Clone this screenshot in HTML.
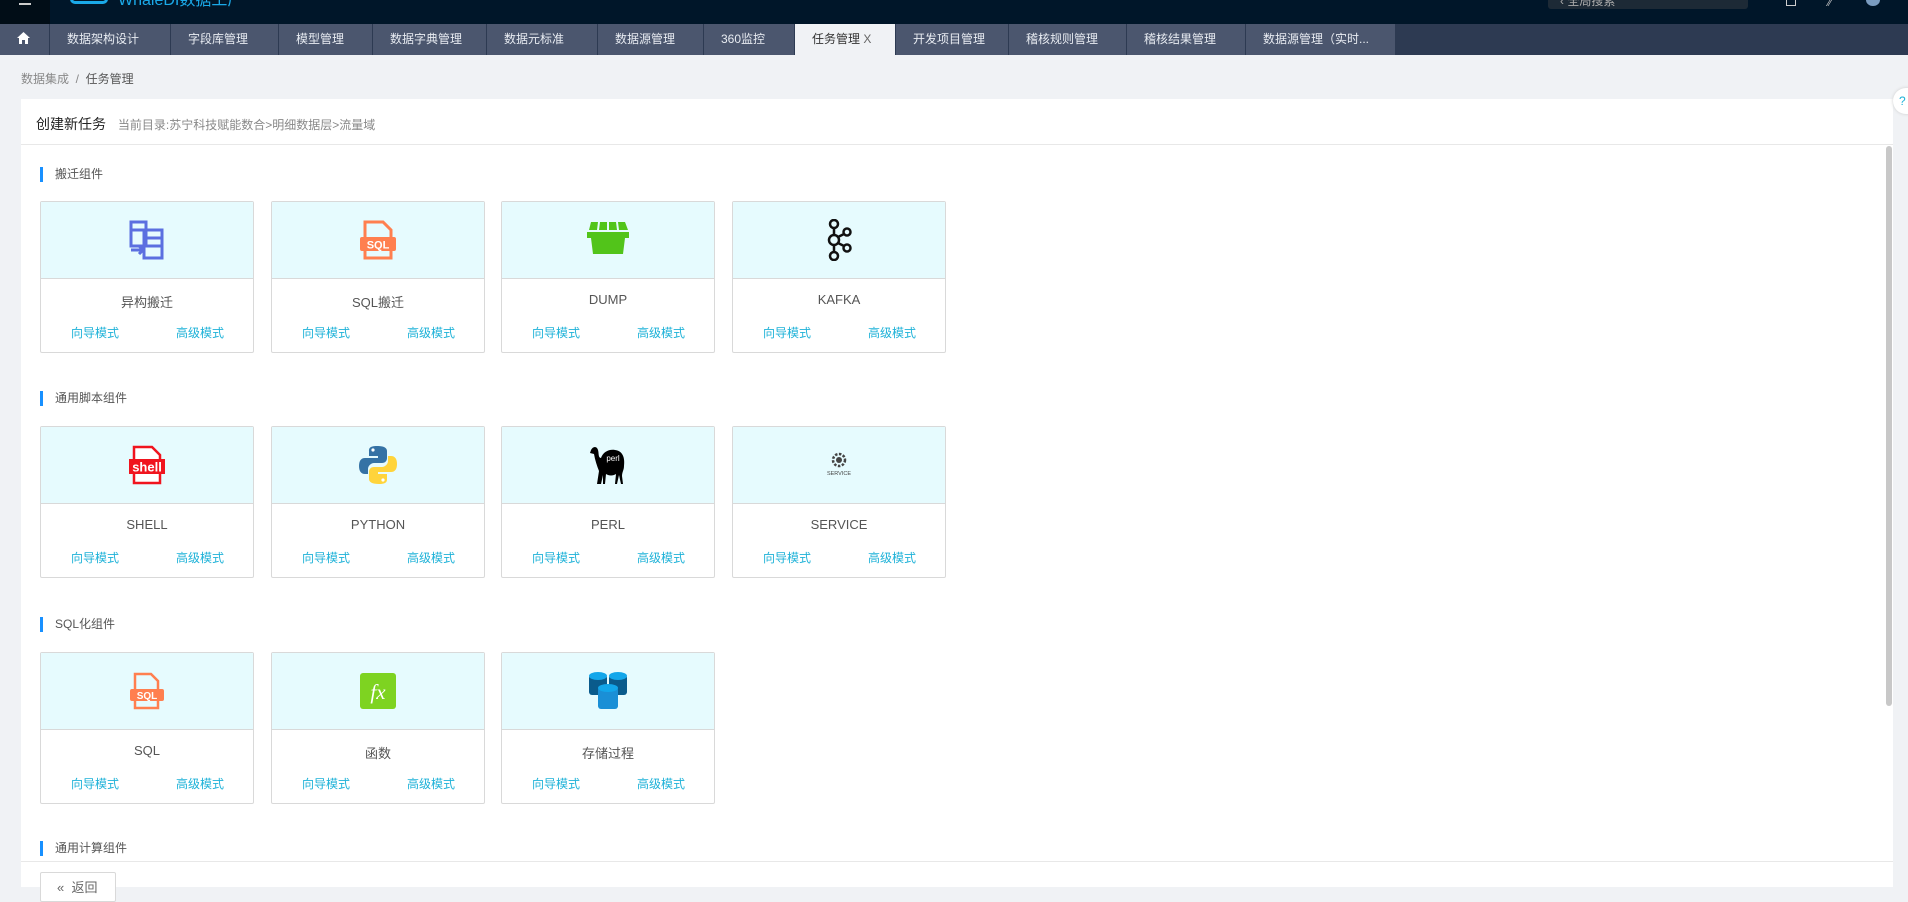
<!DOCTYPE html>
<html><head><meta charset="utf-8"><style>
*{margin:0;padding:0;box-sizing:border-box}
body{width:1908px;height:887px;overflow:hidden;background:#f0f2f5;font-family:"Liberation Sans","Noto Sans CJK SC",sans-serif;position:relative;font-size:13px;color:#333}
.abs{position:absolute}
.top{left:0;top:0;width:1908px;height:24px;background:#001629}
.tabs{left:0;top:24px;width:1908px;height:31px;background:#2d3a52}
.tab{position:absolute;top:0;height:31px;background:#4b566e;border-right:1px solid #2d3a52;color:#e8ecf2;font-size:12px;line-height:31px;padding-left:17px;white-space:nowrap}
.tab.act{background:#f0f2f5;color:#333}
.panel{left:21px;top:99px;width:1872px;height:788px;background:#fff}
.sec{position:absolute;left:40px;font-size:12px;color:#555;padding-left:12px;border-left:3px solid #1890ff;height:15px;line-height:15px}
.card{position:absolute;width:214px;height:152px;border:1px solid #d9d9d9;background:#fff;border-radius:2px}
.card .ic{height:77px;background:#e6fbfe;border-bottom:1px solid #d9d9d9;display:flex;align-items:center;justify-content:center}
.card .nm{text-align:center;font-size:13px;color:#555;margin-top:13px;height:20px}
.card .lk{position:absolute;top:122px;font-size:12px;color:#1eb2d8}
</style></head><body>
<div class="abs top"></div>
<div class="abs" style="left:0;top:0;width:50px;height:24px;background:#010d17"></div>
<div class="abs" style="left:19px;top:3px;width:12px;height:2px;background:#ccc"></div>
<div class="abs" style="left:70px;top:-12px;width:38px;height:16px;border:3px solid #1aa9e8;border-radius:5px"></div>
<div class="abs" style="left:118px;top:-14px;color:#1aa9e8;font-size:16px">WhaleDI数据工厂</div>
<div class="abs" style="left:1548px;top:-4px;width:200px;height:13px;background:#1d2a36;border-radius:3px;color:#aaa;font-size:12px;line-height:10px;padding-left:12px">‹ 全局搜索</div>
<div class="abs" style="left:1786px;top:0;width:10px;height:6px;border:1px solid #ccc;border-top:none"></div>
<div class="abs" style="left:1828px;top:-2px;color:#ccc;font-size:10px">⁄⁄</div>
<div class="abs" style="left:1866px;top:-6px;width:14px;height:12px;border-radius:50%;background:#7a9cc0"></div>
<div class="abs tabs"></div>
<div class="tab" style="left:0;top:24px;width:50px;padding-left:17px">
<svg width="13" height="12" viewBox="0 0 13 12" style="vertical-align:-1px"><path d="M6.5 0L0 6h2v6h3V8h3v4h3V6h2z" fill="#fff"/></svg></div>
<div class="tab" style="left:50px;top:24px;width:121px">数据架构设计</div>
<div class="tab" style="left:171px;top:24px;width:108px">字段库管理</div>
<div class="tab" style="left:279px;top:24px;width:94px">模型管理</div>
<div class="tab" style="left:373px;top:24px;width:114px">数据字典管理</div>
<div class="tab" style="left:487px;top:24px;width:111px">数据元标准</div>
<div class="tab" style="left:598px;top:24px;width:106px">数据源管理</div>
<div class="tab" style="left:704px;top:24px;width:91px">360监控</div>
<div class="tab act" style="left:795px;top:24px;width:101px">任务管理 <span style="color:#666">X</span></div>
<div class="tab" style="left:896px;top:24px;width:113px">开发项目管理</div>
<div class="tab" style="left:1009px;top:24px;width:118px">稽核规则管理</div>
<div class="tab" style="left:1127px;top:24px;width:119px">稽核结果管理</div>
<div class="tab" style="left:1246px;top:24px;width:150px">数据源管理（实时...</div>
<div class="abs" style="left:21px;top:70px;font-size:12px;color:#888">数据集成 &nbsp;/ &nbsp;<span style="color:#555">任务管理</span></div>
<div class="abs panel"></div>
<div class="abs" style="left:1893px;top:88px;width:22px;height:26px;border-radius:13px 0 0 13px;background:#fff;box-shadow:0 0 3px #ccc;color:#1eb2d8;font-size:12px;line-height:26px;padding-left:6px">?</div>
<div class="abs" style="left:36px;top:114px;font-size:14px;color:#222">创建新任务 <span style="font-size:12px;color:#888;margin-left:8px">当前目录:苏宁科技赋能数合&gt;明细数据层&gt;流量域</span></div>
<div class="abs" style="left:21px;top:144px;width:1872px;height:1px;background:#e8e8e8"></div>
<div class="abs" style="left:1886px;top:146px;width:6px;height:560px;background:#c8c8c8;border-radius:3px"></div>

<div class="sec" style="top:167px">搬迁组件</div>
<div class="sec" style="top:391px">通用脚本组件</div>
<div class="sec" style="top:617px">SQL化组件</div>
<div class="sec" style="top:841px">通用计算组件</div>

<div class="card" style="left:40px;top:201px"><div class="ic">
<svg width="36" height="40" viewBox="0 0 36 40"><g fill="none" stroke="#5b6fe0" stroke-width="3"><rect x="2" y="2" width="15" height="24"/><rect x="15" y="10" width="18" height="28"/><path d="M2 10h15M15 18h18M15 26h18"/><path d="M2 30h12M10 26l4 4-4 4"/></g></svg></div>
<div class="nm">异构搬迁</div><span class="lk" style="left:30px">向导模式</span><span class="lk" style="left:135px">高级模式</span></div>
<div class="card" style="left:271px;top:201px"><div class="ic">
<svg width="40" height="40" viewBox="0 0 40 40"><path d="M7 2h18l8 8v28H7z" fill="none" stroke="#ff7f4f" stroke-width="3"/><rect x="2" y="17" width="36" height="14" rx="2" fill="#ff7f4f"/><text x="20" y="28.5" font-size="11" font-weight="bold" fill="#fff" text-anchor="middle" font-family="Liberation Sans">SQL</text></svg></div>
<div class="nm">SQL搬迁</div><span class="lk" style="left:30px">向导模式</span><span class="lk" style="left:135px">高级模式</span></div>
<div class="card" style="left:501px;top:201px"><div class="ic">
<svg width="44" height="36" viewBox="0 0 44 36"><g fill="#52c41a"><path d="M4 0h7l-1 8H2zM13 0h7v8h-8zM22 0h7l1 8h-8zM31 0h7l3 8h-9z" transform="translate(1,0)"/><rect x="1" y="10" width="42" height="6"/><path d="M5 16h34l-2 16H7z"/></g></svg></div>
<div class="nm">DUMP</div><span class="lk" style="left:30px">向导模式</span><span class="lk" style="left:135px">高级模式</span></div>
<div class="card" style="left:732px;top:201px"><div class="ic">
<svg width="26" height="42" viewBox="0 0 26 42"><g fill="none" stroke="#111" stroke-width="2.5"><circle cx="8" cy="5" r="4"/><circle cx="8" cy="21" r="5"/><circle cx="8" cy="37" r="4"/><circle cx="21" cy="13" r="3.5"/><circle cx="21" cy="29" r="3.5"/><path d="M8 9v7M8 26v7M12 18l6-3M12 24l6 3"/></g></svg></div>
<div class="nm">KAFKA</div><span class="lk" style="left:30px">向导模式</span><span class="lk" style="left:135px">高级模式</span></div>

<div class="card" style="left:40px;top:426px"><div class="ic">
<svg width="38" height="40" viewBox="0 0 38 40"><path d="M6 2h18l8 8v28H6z" fill="#fff" stroke="#f0141e" stroke-width="2.5"/><rect x="1" y="14" width="36" height="15" fill="#f0141e"/><text x="19" y="26.5" font-size="13" font-weight="bold" fill="#fff" text-anchor="middle" font-family="Liberation Sans">shell</text></svg></div>
<div class="nm">SHELL</div><span class="lk" style="left:30px">向导模式</span><span class="lk" style="left:135px">高级模式</span></div>
<div class="card" style="left:271px;top:426px"><div class="ic">
<svg width="38" height="40" viewBox="0 0 38 40"><path d="M18 1c-8 0-8 3-8 5v5h9v2H6c-4 0-6 3-6 8s2 8 6 8h3v-5c0-3 3-6 6-6h8c3 0 5-2 5-5V6c0-3-3-5-10-5z" fill="#3572a5"/><circle cx="14" cy="5" r="1.6" fill="#fff"/><path d="M20 39c8 0 8-3 8-5v-5h-9v-2h13c4 0 6-3 6-8s-2-8-6-8h-3v5c0 3-3 6-6 6h-8c-3 0-5 2-5 5v7c0 3 3 5 10 5z" fill="#ffd43b"/><circle cx="24" cy="35" r="1.6" fill="#fff"/></svg></div>
<div class="nm">PYTHON</div><span class="lk" style="left:30px">向导模式</span><span class="lk" style="left:135px">高级模式</span></div>
<div class="card" style="left:501px;top:426px"><div class="ic">
<svg width="40" height="42" viewBox="0 0 40 42"><path d="M3 6c2-4 6-4 7 0 1 3 0 8 3 8 2-6 8-9 14-8 8 1 10 8 9 16 0 4-2 6-2 10l1 8h-2l-2-9-2 9h-2l1-10c-3 2-7 2-10 0l-1 10h-2v-9l-2 9H9l2-13C9 22 7 16 6 10L2 9z" fill="#000"/><text x="25" y="17" font-size="8" fill="#fff" text-anchor="middle" font-family="Liberation Sans">perl</text></svg></div>
<div class="nm">PERL</div><span class="lk" style="left:30px">向导模式</span><span class="lk" style="left:135px">高级模式</span></div>
<div class="card" style="left:732px;top:426px"><div class="ic">
<svg width="36" height="26" viewBox="0 0 36 26"><circle cx="18" cy="8" r="6" fill="none" stroke="#444" stroke-width="2.5" stroke-dasharray="2.5 1.5"/><circle cx="18" cy="8" r="3" fill="#444"/><text x="18" y="23" font-size="5.5" fill="#444" text-anchor="middle" font-family="Liberation Sans">SERVICE</text></svg></div>
<div class="nm">SERVICE</div><span class="lk" style="left:30px">向导模式</span><span class="lk" style="left:135px">高级模式</span></div>

<div class="card" style="left:40px;top:652px"><div class="ic">
<svg width="36" height="38" viewBox="0 0 36 38"><path d="M6 2h16l7 7v27H6z" fill="none" stroke="#ff7f4f" stroke-width="2.5"/><rect x="1" y="17" width="34" height="12" rx="2" fill="#ff7f4f"/><text x="18" y="27" font-size="10" font-weight="bold" fill="#fff" text-anchor="middle" font-family="Liberation Sans">SQL</text></svg></div>
<div class="nm">SQL</div><span class="lk" style="left:30px">向导模式</span><span class="lk" style="left:135px">高级模式</span></div>
<div class="card" style="left:271px;top:652px"><div class="ic">
<svg width="36" height="36" viewBox="0 0 36 36"><rect width="36" height="36" rx="3" fill="#7ed321"/><text x="18" y="26" font-size="21" font-style="italic" fill="#fff" text-anchor="middle" font-family="Liberation Serif">fx</text></svg></div>
<div class="nm">函数</div><span class="lk" style="left:30px">向导模式</span><span class="lk" style="left:135px">高级模式</span></div>
<div class="card" style="left:501px;top:652px"><div class="ic">
<svg width="38" height="40" viewBox="0 0 38 40"><g><rect x="0" y="4" width="18" height="20" rx="3" fill="#0a5b8c"/><ellipse cx="9" cy="5" rx="9" ry="4" fill="#12a6ea"/><rect x="20" y="4" width="18" height="20" rx="3" fill="#0a5b8c"/><ellipse cx="29" cy="5" rx="9" ry="4" fill="#12a6ea"/><rect x="9" y="16" width="20" height="22" rx="3" fill="#1a8fd6"/><ellipse cx="19" cy="17" rx="10" ry="4" fill="#12a6ea"/></g></svg></div>
<div class="nm">存储过程</div><span class="lk" style="left:30px">向导模式</span><span class="lk" style="left:135px">高级模式</span></div>

<div class="abs" style="left:21px;top:861px;width:1872px;height:1px;background:#e8e8e8"></div>
<div class="abs" style="left:40px;top:872px;width:76px;height:30px;border:1px solid #d9d9d9;border-radius:2px;background:#fff;color:#666;font-size:13px;padding:4px 0 0 16px">«&nbsp; 返回</div>
</body></html>
